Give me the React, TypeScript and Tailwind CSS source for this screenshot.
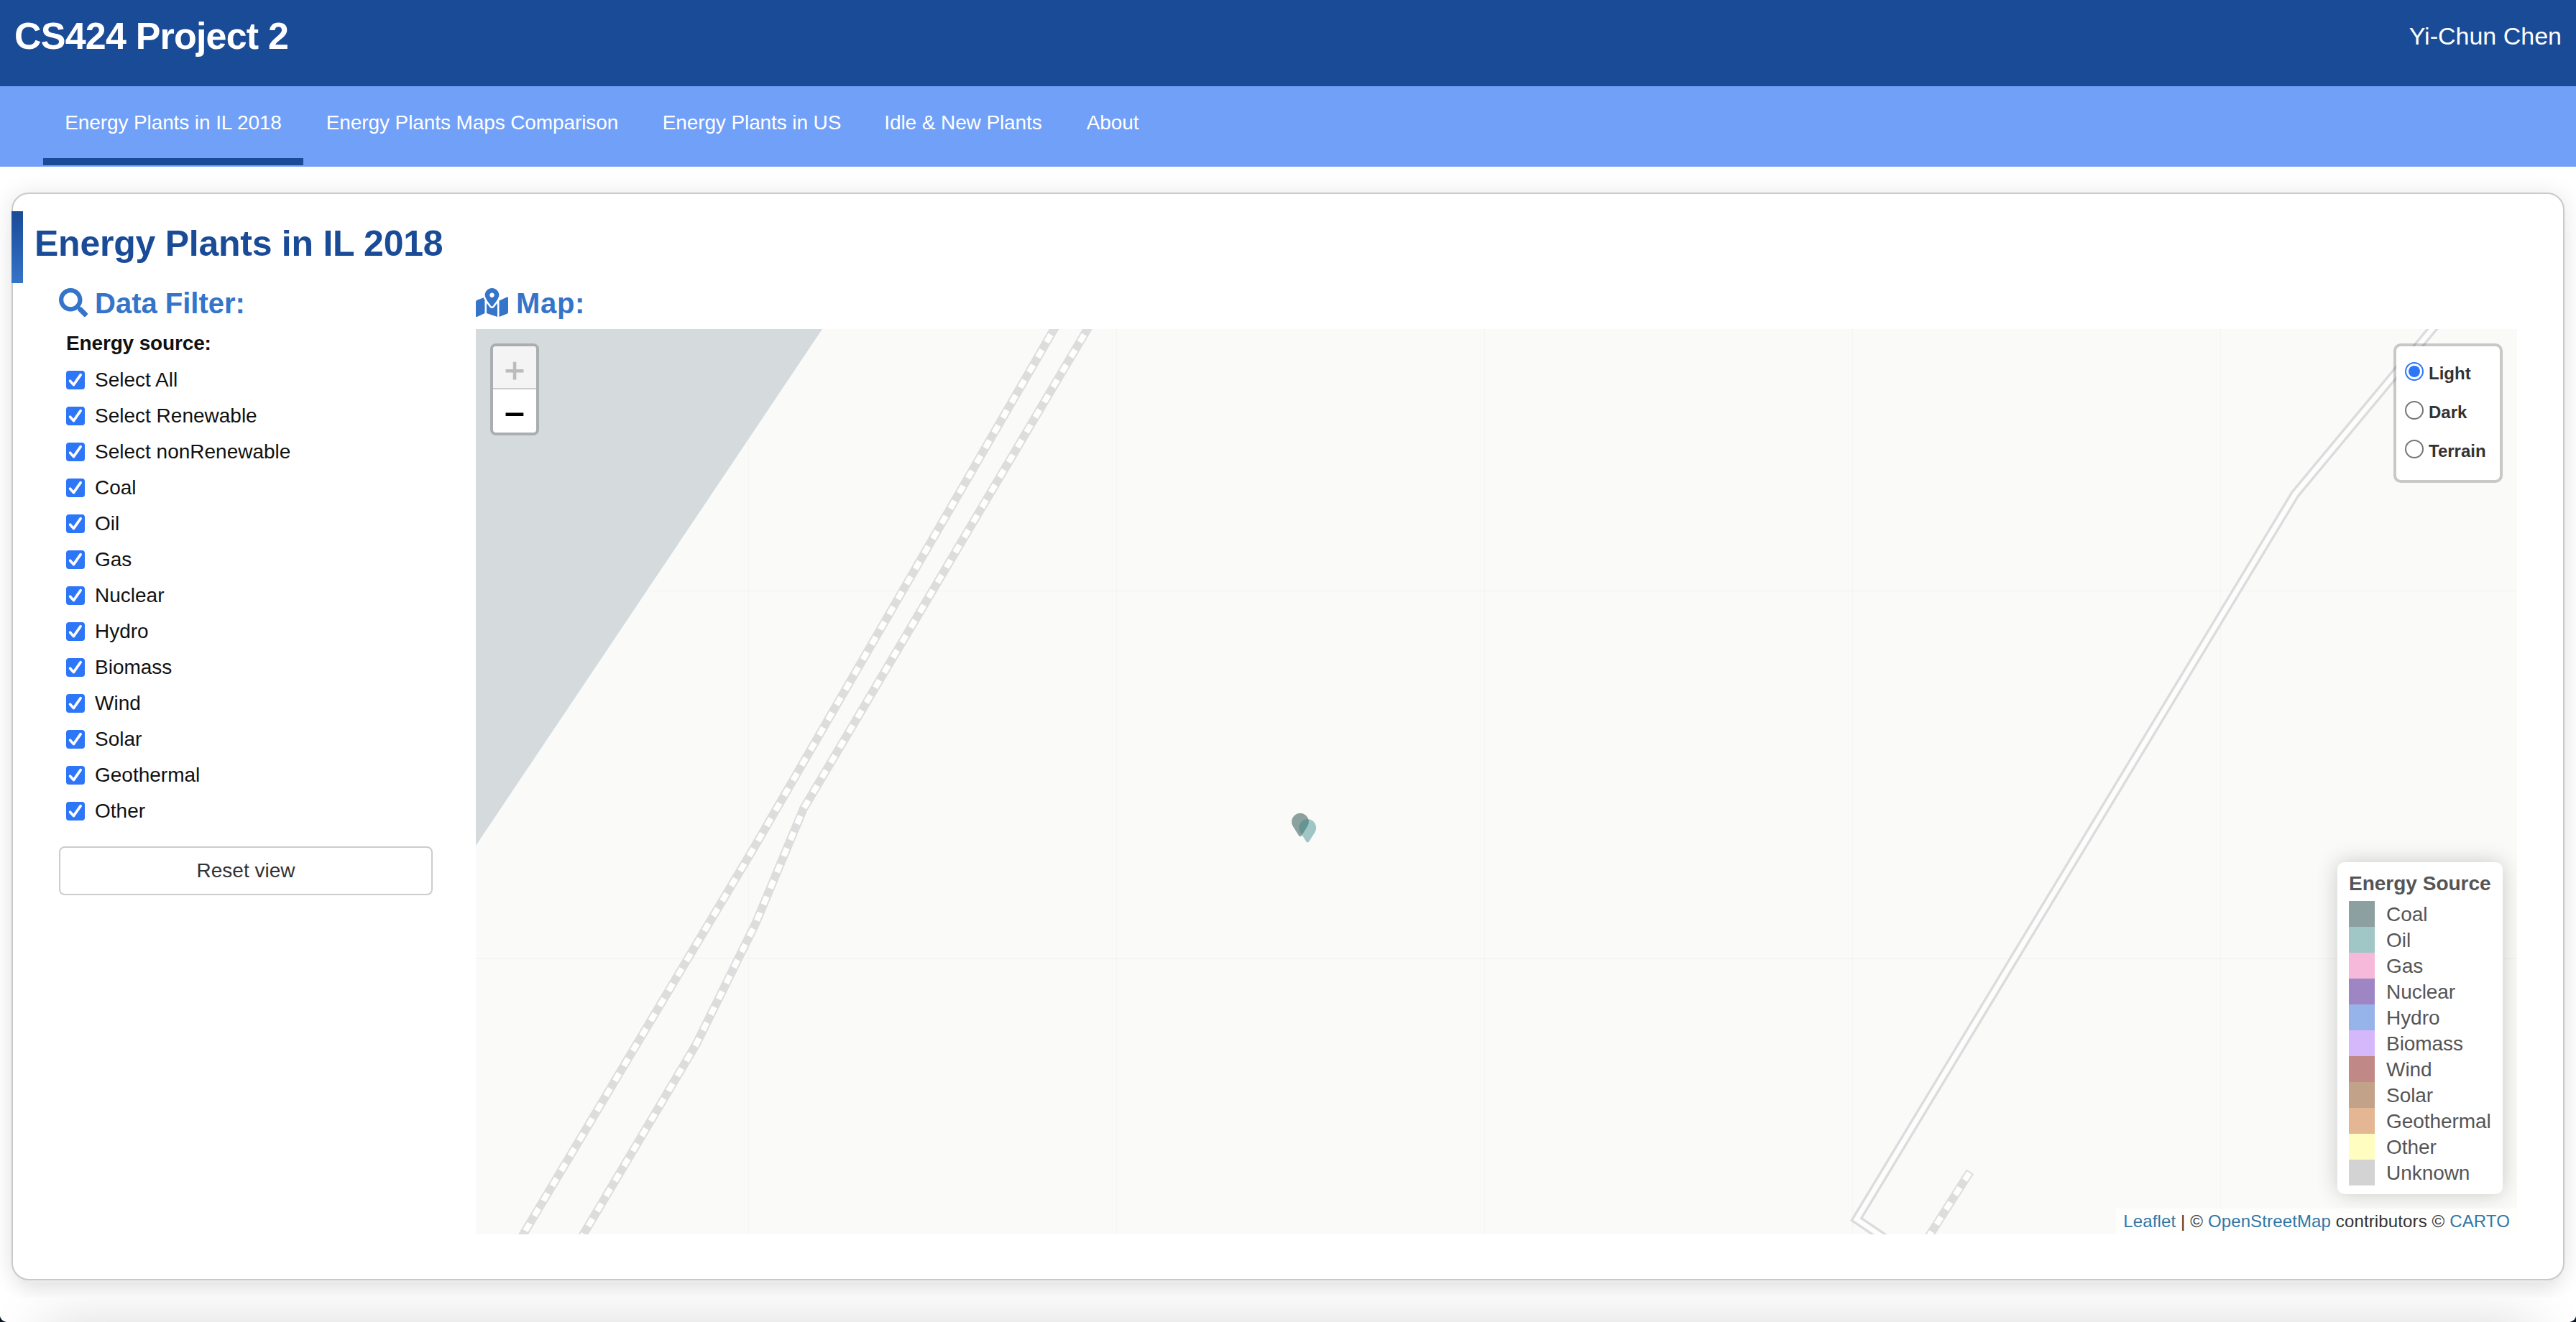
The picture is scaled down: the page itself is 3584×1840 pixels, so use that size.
import React from "react";
import { FaMapMarkedAlt, FaSearch } from "react-icons/fa";

const TABS = [
  { label: "Energy Plants in IL 2018", width: "w-[362px]", active: true },
  { label: "Energy Plants Maps Comparison", width: "w-[470px]", active: false },
  { label: "Energy Plants in US", width: "w-[308px]", active: false },
  { label: "Idle & New Plants", width: "w-[280px]", active: false },
  { label: "About", width: "w-[136px]", active: false },
];

const FILTERS = [
  "Select All",
  "Select Renewable",
  "Select nonRenewable",
  "Coal",
  "Oil",
  "Gas",
  "Nuclear",
  "Hydro",
  "Biomass",
  "Wind",
  "Solar",
  "Geothermal",
  "Other",
];

const LEGEND = [
  { label: "Coal", color: "bg-[#8c9fa1]" },
  { label: "Oil", color: "bg-[#a0c6c6]" },
  { label: "Gas", color: "bg-[#f6b9d9]" },
  { label: "Nuclear", color: "bg-[#9e85c3]" },
  { label: "Hydro", color: "bg-[#96b3ea]" },
  { label: "Biomass", color: "bg-[#d5b8fb]" },
  { label: "Wind", color: "bg-[#c08986]" },
  { label: "Solar", color: "bg-[#c2a389]" },
  { label: "Geothermal", color: "bg-[#e5b693]" },
  { label: "Other", color: "bg-[#fffdbf]" },
  { label: "Unknown", color: "bg-[#d3d3d3]" },
];

const BASE_LAYERS = ["Light", "Dark", "Terrain"];

function Header() {
  return (
    <header className="flex h-[120px] shrink-0 justify-between bg-[#1a4b97] pl-5 pr-5 text-white">
      <h1 className="pt-[20px] text-[52px] leading-[60px] font-bold tracking-[-0.8px]">CS424 Project 2</h1>
      <div className="pt-[30px] text-[34px] leading-[40px]">Yi-Chun Chen</div>
    </header>
  );
}

function Tabs() {
  return (
    <nav className="flex h-[112px] shrink-0 bg-[#71a0f8] pl-[60px] text-[28px] text-white">
      {TABS.map((tab) => (
        <a
          key={tab.label}
          className={`${tab.width} flex h-[110px] justify-center border-b-[10px] pt-[31px] leading-[40px] tracking-[-0.1px] whitespace-nowrap ${
            tab.active ? "border-[#1a4b97]" : "border-transparent"
          }`}
        >
          {tab.label}
        </a>
      ))}
    </nav>
  );
}

function Checkbox() {
  return (
    <span className="flex h-[26px] w-[26px] shrink-0 rounded-[4px] bg-[#2e76f8]">
      <svg viewBox="0 0 26 26" className="h-[26px] w-[26px]" fill="none">
        <path d="M5.6 14.2 10.4 19.6 20.2 5.6" stroke="#fff" strokeWidth="3.6" strokeLinecap="round" strokeLinejoin="round" />
      </svg>
    </span>
  );
}

function Sidebar() {
  return (
    <aside className="flex w-[520px] flex-col">
      <h3 className="flex h-[54px] items-center gap-[10px] text-[40px] font-bold text-[#3474c9]">
        <FaSearch className="h-[40px] w-[40px]" />
        <span className="pt-[2px]">Data Filter:</span>
      </h3>
      <div className="mt-3 pl-[10px] text-[28px] leading-[36px] font-bold tracking-[-0.15px] text-[#111]">Energy source:</div>
      <div className="mt-2 flex flex-col pl-[10px] text-[28px] text-[#111]">
        {FILTERS.map((name) => (
          <label key={name} className="flex h-[50px] items-center gap-[14px]">
            <Checkbox />
            <span>{name}</span>
          </label>
        ))}
      </div>
      <button className="mt-6 h-[68px] w-full rounded-[8px] border-2 border-[#ccc] bg-white text-[28px] text-[#333]">
        Reset view
      </button>
    </aside>
  );
}

/* Railway: grey casing with a dashed white core. */
function Rail({ points, offset }: { points: string; offset: number }) {
  return (
    <g fill="none">
      <polyline points={points} stroke="#dddddd" strokeWidth="12" />
      <polyline points={points} stroke="#ffffff" strokeWidth="8" strokeDasharray="12 12.3" strokeDashoffset={offset} />
    </g>
  );
}

const ROAD = "2730.3,-10 2531,230 1921,1239 1966,1269.5";
const PIN = "M0 20.6C-1.2 20.6-1.8 19.6-2.4 18.6L-10.2 6.4A12 12 0 1 1 10.2 6.4L2.4 18.6C1.8 19.6 1.2 20.6 0 20.6Z";

function MapCanvas() {
  return (
    <svg viewBox="0 0 2840 1260" className="block h-[1260px] w-[2840px]">
      <rect width="2840" height="1260" fill="#fafaf8" />
      <g fill="#f4f4f2">
        {[379, 891, 1403, 1915, 2427].map((x) => (
          <rect key={x} x={x} y="0" width="1" height="1260" />
        ))}
        <rect x="0" y="364" width="2840" height="1" fill="#f2f2f0" />
        <rect x="0" y="876" width="2840" height="1" fill="#efefee" />
      </g>
      <polygon points="0,0 482,0 0,719" fill="#d5dadd" />
      <Rail points="808,-6 387,722 66,1260 60,1270" offset={-16} />
      <Rail points="854.5,-6 455.7,668 389,828 306.5,995.6 149.6,1260 144,1270" offset={-16} />
      <Rail points="2079,1172.7 2017,1270" offset={-2} />
      <g fill="none" strokeLinejoin="miter">
        <polyline points={ROAD} stroke="#dcdcdc" strokeWidth="13.4" />
        <polyline points={ROAD} stroke="#fdfdfd" strokeWidth="6.6" />
      </g>
      <path d={PIN} transform="translate(1147 685.7)" fill="rgb(11,54,52)" fillOpacity="0.46" />
      <path d={PIN} transform="translate(1157.3 694)" fill="rgb(52,137,137)" fillOpacity="0.46" />
    </svg>
  );
}

function ZoomControl() {
  return (
    <div className="absolute top-5 left-5 flex w-[68px] flex-col overflow-hidden rounded-[8px] border-4 border-black/20 bg-white bg-clip-padding text-center text-[49px] leading-[49px]">
      <button className="h-[60px] border-b-2 border-[#ccc] bg-[#f4f4f4] pt-[9px] text-[#bbb] [-webkit-text-stroke:1px_#bbb]">
        +
      </button>
      <button className="h-[60px] pt-[8px] text-black [-webkit-text-stroke:1px_#000]">−</button>
    </div>
  );
}

function LayerControl() {
  return (
    <div className="absolute top-5 right-5 flex h-[194px] w-[152px] flex-col rounded-[10px] border-4 border-black/20 bg-white bg-clip-padding pt-2 pl-3 text-[24px] font-bold text-[#333]">
      {BASE_LAYERS.map((name, i) => (
        <label key={name} className="flex h-[54px] items-center gap-[7px]">
          {i === 0 ? (
            <span className="flex h-[26px] w-[26px] items-center justify-center rounded-full border-2 border-[#2e76f8] bg-white">
              <span className="h-4 w-4 rounded-full bg-[#2e76f8]" />
            </span>
          ) : (
            <span className="h-[26px] w-[26px] rounded-full border-2 border-[#767676] bg-white" />
          )}
          <span className="pt-[6px]">{name}</span>
        </label>
      ))}
    </div>
  );
}

function Legend() {
  return (
    <div className="absolute right-5 bottom-[56px] w-[230px] rounded-[10px] bg-white/95 px-4 pt-3 pb-3 text-[28px] leading-[36px] text-[#555] shadow-[0_0_30px_rgba(0,0,0,0.2)]">
      <h4 className="mb-1.5 font-bold whitespace-nowrap">Energy Source</h4>
      {LEGEND.map((item) => (
        <div key={item.label} className="flex h-9 gap-4">
          <span className={`h-9 w-9 shrink-0 ${item.color}`} />
          <span className="pt-px tracking-[-0.05px]">{item.label}</span>
        </div>
      ))}
    </div>
  );
}

function Attribution() {
  return (
    <div className="absolute right-0 bottom-0 h-[36px] bg-white/70 px-[10px] text-[24px] leading-[36px] tracking-[0.13px] whitespace-nowrap text-[#333]">
      <a className="text-[#3178a7]">Leaflet</a> | © <a className="text-[#3178a7]">OpenStreetMap</a> contributors ©{" "}
      <a className="text-[#3178a7]">CARTO</a>
    </div>
  );
}

function MapPanel() {
  return (
    <section className="flex w-[2840px] flex-col">
      <h3 className="flex h-[54px] items-center gap-[11px] text-[40px] font-bold tracking-[0.7px] text-[#3474c9]">
        <FaMapMarkedAlt className="h-[40px] w-[45px]" />
        <span className="pt-[2px]">Map:</span>
      </h3>
      <div className="relative mt-[10px] h-[1260px] overflow-hidden">
        <MapCanvas />
        <ZoomControl />
        <LayerControl />
        <Legend />
        <Attribution />
      </div>
    </section>
  );
}

export default function App() {
  return (
    <div className="h-[1840px] w-[3584px] bg-[#0c1524] font-['Liberation_Sans',Arial,sans-serif]">
      <div className="flex h-full flex-col overflow-hidden rounded-b-[10px] bg-white">
        <Header />
        <Tabs />
        <main className="flex flex-1 flex-col">
          <div className="mx-4 mt-9 h-[1514px] shrink-0 rounded-[24px] border-2 border-[#c9c9c9] bg-white pt-6 shadow-[0_2px_32px_rgba(0,0,0,0.11),0_30px_30px_-10px_rgba(0,0,0,0.05)]">
            <div className="-ml-[2px] flex h-[100px]">
              <span className="w-4 bg-linear-to-b from-[#1a4b97] to-[#3474c9]" />
              <h2 className="pt-[17px] pl-4 text-[50px] leading-[56px] font-bold tracking-[-0.25px] text-[#1a4b97]">
                Energy Plants in IL 2018
              </h2>
            </div>
            <div className="flex gap-[60px] pl-16">
              <Sidebar />
              <MapPanel />
            </div>
          </div>
          <div className="mx-[30px] h-1 shrink-0 rounded-b-[4px] bg-[#ebebeb]" />
          <div className="mt-5 h-[34px] overflow-hidden bg-white px-[60px] pt-[36px]">
            <div className="h-[200px] shadow-[0_0_80px_rgba(0,0,0,0.15)]" />
          </div>
        </main>
      </div>
    </div>
  );
}
